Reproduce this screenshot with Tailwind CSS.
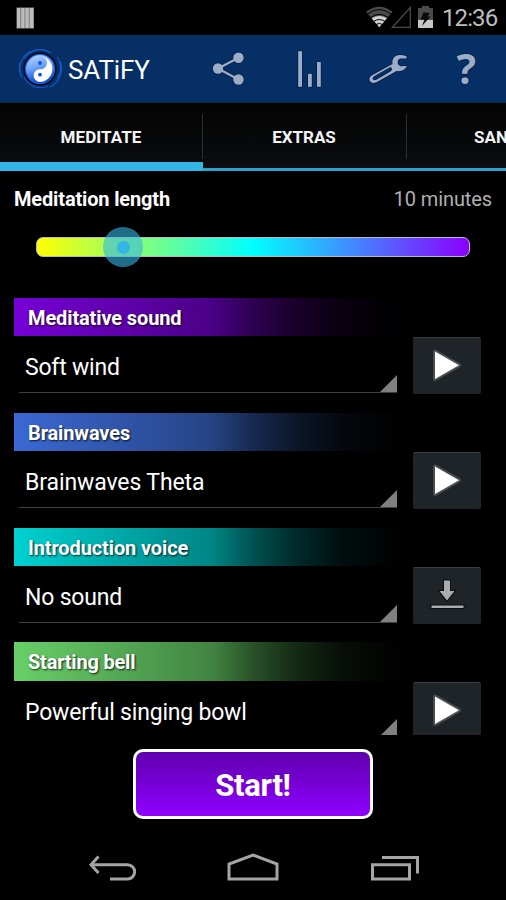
<!DOCTYPE html>
<html lang="en">
<head>
<meta charset="utf-8">
<title>SATiFY</title>
<script src="https://cdn.jsdelivr.net/npm/@tailwindcss/browser@4"></script>
</head>
<body class="bg-black">
<div class="w-[506px] h-[900px] bg-black text-white font-['Roboto',sans-serif] flex flex-col overflow-hidden whitespace-nowrap">
  <!-- Status bar -->
  <div class="h-[35px] shrink-0 flex items-center justify-between pl-4 pr-2">
    <svg class="w-[20px] h-[22px]" viewBox="0 0 20 22"><g fill="#bdbdbd"><rect x="0.5" y="0.5" width="17.5" height="21" fill="#8a8a8a"/><rect x="1" y="1" width="3" height="20"/><rect x="5.3" y="1" width="3" height="20"/><rect x="9.6" y="1" width="3" height="20"/><rect x="13.9" y="1" width="3.2" height="20"/></g></svg>
    <div class="flex items-center">
      <svg class="w-[70px] h-[35px]" viewBox="364 0 70 35">
        <path d="M366 11.800Q379.300 1.500 392.600 11.800L379.300 27.200Z" fill="#4a4a4a"/>
        <path d="M371.600 18.300Q379.300 13.500 387 18.300L379.300 27.200Z" fill="#d0d0d0"/>
        <g fill="none" stroke="#000" stroke-width="1"><path d="M367.500 14Q379.300 5 391.100 14"/><path d="M370.500 17.600Q379.300 11 388.100 17.600"/><path d="M373.500 21.500Q379.300 17.500 385.100 21.500"/><path d="M376 24.600Q379.300 22 382.600 24.600"/></g>
        <path d="M392.500 27.300H410.300V7.500Z" fill="none" stroke="#4a4a4a" stroke-width="1.300"/>
        <path d="M422 6h7v2h4v13h-15V8h4z" fill="#4a4a4a"/>
        <path d="M418 20h15v8h-15z" fill="#c8c8c8"/>
        <path d="M423.500 12.300L429.700 13L427.500 16.500H430.500L422 26L424.500 19.500H420.500Z" fill="#0a0a0a"/>
      </svg>
      <span class="w-[56px] ml-[8px] mt-px text-[24px] leading-[28px] text-[#bdbdbd] tracking-[-0.9px]">12:36</span>
    </div>
  </div>

  <!-- Action bar -->
  <div class="h-[68px] shrink-0 bg-[#052f65] flex items-center border-b border-[#04264f]">
    <svg class="ml-[18px] w-[44px] h-[42px]" viewBox="18 48 44 42">
      <defs>
        <linearGradient id="yy" x1="0" y1="0" x2=".3" y2="1"><stop offset="0" stop-color="#c4dcff"/><stop offset=".5" stop-color="#6ea4f6"/><stop offset="1" stop-color="#0648d8"/></linearGradient>
      </defs>
      <g fill="none" stroke="#1557c4" stroke-width="1.200">
        <path d="M22 78A20 20 0 0 1 30 51.500"/><path d="M24 59A19 19 0 0 1 51 53"/><path d="M29 53A19 19 0 0 1 44 50"/><path d="M60 61A20.500 20.500 0 0 1 50 87"/><path d="M57 57A19 19 0 0 1 57 79"/><path d="M24 77A18.500 18.500 0 0 0 48 86"/><path d="M19.500 63V72"/>
      </g>
      <circle cx="40" cy="69" r="16.800" fill="#020a1c"/>
      <circle cx="40" cy="69" r="14.500" fill="url(#yy)" stroke="#1d60e4" stroke-width="1.200"/>
      <path d="M41 56.200A12.900 12.900 0 0 1 40 81.900A6.300 6.300 0 0 1 40 69.200A6.300 6.300 0 0 0 41 56.200Z" fill="#fff"/>
      <circle cx="40" cy="63" r="1.900" fill="#0b55e0"/><circle cx="40" cy="74.700" r="1.900" fill="#0b55e0"/>
    </svg>
    <span class="ml-[6px] w-[128px] text-[26px] leading-[32px] tracking-[-0.15px] pt-[2px]">SATiFY</span>
    <svg class="w-[310px] h-[68px]" viewBox="196 35 310 68">
      <g fill="#9dadc8" stroke="#041f48" stroke-width="1.600" paint-order="stroke">
        <path d="M218 68.500L238.500 57.500M218 68.500L238.500 79.500" fill="none" stroke="#041f48" stroke-width="4"/>
        <circle cx="218" cy="68.500" r="5.200"/><circle cx="238.500" cy="57.700" r="5.200"/><circle cx="238.500" cy="79.500" r="5.200"/>
        <path d="M218 68.500L238.500 57.700M218 68.500L238.500 79.500" fill="none" stroke="#9dadc8" stroke-width="2.400"/>
        <rect x="298.200" y="51.200" width="3.800" height="35.600"/><rect x="308" y="73.800" width="3.800" height="13"/><rect x="317" y="62" width="3.800" height="24.800"/>
        <path fill-rule="evenodd" d="M406.500 56.300L403 55.300Q396.500 54 393.700 57.800Q391.800 60.500 392.500 64L372 75.300Q368 78 370 81.300Q372.300 84.300 376.500 82.300L396.500 71Q404.500 72 406.800 66L400.200 66.300L397.800 64V60.200L400.200 58.400H406.500ZM390 67.200L374.500 75.900Q371.800 77.800 373 79.400Q374.500 80.600 376.800 79.400L391.300 71Q393 67 390 67.200Z"/>
      </g>
      <text x="456.500" y="83.500" font-size="41" font-weight="700" font-family="'Open Sans',sans-serif" fill="#9dadc8" stroke="#041f48" stroke-width="1.600" paint-order="stroke">?</text>
    </svg>
  </div>

  <!-- Tabs -->
  <div class="h-[68px] shrink-0 flex bg-linear-to-b from-[#040404] to-[#0b0d10] text-[17px] font-bold text-[#f3f3f3]">
    <div class="w-[203px] shrink-0 border-b-[9px] border-[#33b5e5] flex justify-center pt-[22px] leading-6"><span class="tracking-[0.05px] -ml-px">MEDITATE</span></div>
    <div class="w-[203px] shrink-0 border-b-[3px] border-[#2ba0cc] flex justify-between pt-[11px]"><i class="w-px h-[45px] -ml-px bg-[#2c2e30]"></i><span class="leading-6 mt-[11px]">EXTRAS</span><i class="w-px"></i></div>
    <div class="w-[203px] shrink-0 border-b-[3px] border-[#2ba0cc] flex pt-[11px]"><i class="w-px h-[45px] bg-[#2c2e30]"></i><span class="leading-6 mt-[11px] ml-[67px]">SANGHA</span></div>
  </div>

  <!-- Length slider -->
  <div class="h-[127px] shrink-0 px-[14px] pt-[14px]">
    <div class="flex justify-between text-[20px] leading-7"><span class="font-bold tracking-[-0.15px]">Meditation length</span><span class="text-[#b0b0b0] tracking-[-0.1px]">10 minutes</span></div>
    <div class="relative mt-[24px] ml-[22px] w-[434px] h-[20px] rounded-[7px] border-[1.5px] border-[#b9b9c4] bg-linear-to-r/srgb from-[#ff0] via-[#0ff] to-[#8b00ff]">
      <div class="absolute left-[66px] top-[-11px] w-[40px] h-[40px] rounded-full bg-[#33b5e5]/60 flex items-center justify-center"><div class="w-[13px] h-[13px] rounded-full bg-[#33b5e5]"></div></div>
    </div>
  </div>

  <!-- Sound settings -->
  <div class="h-[437px] shrink-0 overflow-hidden pl-[14px]">
    <div class="h-[114.8px]">
      <div class="w-[387px] h-[38px] pl-[14px] text-[20px] leading-[40px] tracking-[-0.12px] font-bold bg-[linear-gradient(90deg,#7600d6_0%,#4b0087_51%,#2d0050_62%,#180029_73%,#08000e_85%,#000_100%)] [text-shadow:1px_1px_2px_#000c]">Meditative sound</div>
      <div class="flex pt-px">
        <div class="relative ml-[5px] w-[378px] h-[56px] border-b-[1.5px] border-[#424242] pl-[6px] text-[23px] leading-[62px] tracking-[-0.2px]">Soft wind<svg class="absolute right-0 bottom-0 w-[17px] h-[17px]" viewBox="0 0 17 17"><path d="M17 0V17H0Z" fill="#808080"/></svg></div>
        <div class="ml-[16px] w-[68px] h-[57px] rounded-[2px] bg-[#1f2428] border-t-[1.5px] border-[#3b3d3f]"><svg class="w-[68px] h-[56px]" viewBox="0 1 68 56"><path d="M22 14.500V42L46 28.300Z" fill="#fff" stroke="#4b4e51" stroke-width="4" stroke-linejoin="round" paint-order="stroke"/></svg></div>
      </div>
    </div>
    <div class="h-[114.8px]">
      <div class="w-[387px] h-[38px] pl-[14px] text-[20px] leading-[40px] tracking-[-0.12px] font-bold bg-[linear-gradient(90deg,#3b68d3_0%,#264485_51%,#172950_62%,#0c1629_73%,#04070e_85%,#000_100%)] [text-shadow:1px_1px_2px_#000c]">Brainwaves</div>
      <div class="flex pt-px">
        <div class="relative ml-[5px] w-[378px] h-[56px] border-b-[1.5px] border-[#424242] pl-[6px] text-[23px] leading-[62px] tracking-[-0.1px]">Brainwaves Theta<svg class="absolute right-0 bottom-0 w-[17px] h-[17px]" viewBox="0 0 17 17"><path d="M17 0V17H0Z" fill="#808080"/></svg></div>
        <div class="ml-[16px] w-[68px] h-[57px] rounded-[2px] bg-[#1f2428] border-t-[1.5px] border-[#3b3d3f]"><svg class="w-[68px] h-[56px]" viewBox="0 1 68 56"><path d="M22 14.500V42L46 28.300Z" fill="#fff" stroke="#4b4e51" stroke-width="4" stroke-linejoin="round" paint-order="stroke"/></svg></div>
      </div>
    </div>
    <div class="h-[114.8px]">
      <div class="w-[387px] h-[38px] pl-[14px] text-[20px] leading-[40px] tracking-[-0.12px] font-bold bg-[linear-gradient(90deg,#00d1d1_0%,#008585_51%,#005050_62%,#002929_73%,#000e0e_85%,#000_100%)] [text-shadow:1px_1px_2px_#000c]">Introduction voice</div>
      <div class="flex pt-px">
        <div class="relative ml-[5px] w-[378px] h-[56px] border-b-[1.5px] border-[#424242] pl-[6px] text-[23px] leading-[62px] tracking-[-0.2px]">No sound<svg class="absolute right-0 bottom-0 w-[17px] h-[17px]" viewBox="0 0 17 17"><path d="M17 0V17H0Z" fill="#808080"/></svg></div>
        <div class="ml-[16px] w-[68px] h-[57px] rounded-[2px] bg-[#1f2428] border-t-[1.5px] border-[#3b3d3f]"><svg class="w-[68px] h-[56px]" viewBox="0 1 68 56"><g fill="#a9abad" stroke="#0b0d0f" stroke-width="2" paint-order="stroke"><path d="M31 13.500H37V24H41.500L34 33.500L26.500 24H31Z"/><rect x="18.500" y="38.500" width="32" height="2.500"/></g></svg></div>
      </div>
    </div>
    <div class="h-[114.8px]">
      <div class="w-[387px] h-[38.600px] pl-[14px] text-[20px] leading-[40px] tracking-[-0.2px] font-bold bg-[linear-gradient(90deg,#68d068_0%,#428542_51%,#285028_62%,#142914_73%,#070e07_85%,#000_100%)] [text-shadow:1px_1px_2px_#000c]">Starting bell</div>
      <div class="flex pt-px">
        <div class="relative ml-[5px] w-[378px] h-[56px] border-b-[1.5px] border-[#424242] pl-[6px] text-[23px] leading-[62px] tracking-[-0.2px]">Powerful singing bowl<svg class="absolute right-0 bottom-[1px] w-[17px] h-[17px]" viewBox="0 0 17 17"><path d="M17 0V17H0Z" fill="#808080"/></svg></div>
        <div class="ml-[16px] w-[68px] h-[57px] rounded-[2px] bg-[#1f2428] border-t-[1.5px] border-[#3b3d3f]"><svg class="w-[68px] h-[56px]" viewBox="0 1 68 56"><path d="M22 14.500V42L46 28.300Z" fill="#fff" stroke="#4b4e51" stroke-width="4" stroke-linejoin="round" paint-order="stroke"/></svg></div>
      </div>
    </div>
  </div>

  <!-- Start button -->
  <div class="h-[97px] shrink-0 pt-[14px] flex justify-center">
    <button class="w-[240px] h-[70px] rounded-[10px] border-[3px] border-white bg-linear-to-b/srgb from-[#6000ae] to-[#8f00ff] text-[31px] leading-[66px] tracking-[-0.3px] pt-px font-bold">Start!</button>
  </div>

  <!-- Navigation bar -->
  <div class="h-[68px] shrink-0">
    <svg class="w-[506px] h-[68px]" viewBox="0 832 506 68" fill="none" stroke="#a5a5a5" stroke-width="3">
      <path d="M98.500 856.500L91 864.700L98.500 873"/><path d="M92 864.700H127.500A7 7 0 0 1 127.500 879H110"/>
      <path d="M229 879V864L253 855L277 864V879Z"/>
      <path d="M372.500 864.700H409.500V879H372.500ZM382 857.500H417.500V873.500"/>
    </svg>
  </div>
</div>
</body>
</html>
